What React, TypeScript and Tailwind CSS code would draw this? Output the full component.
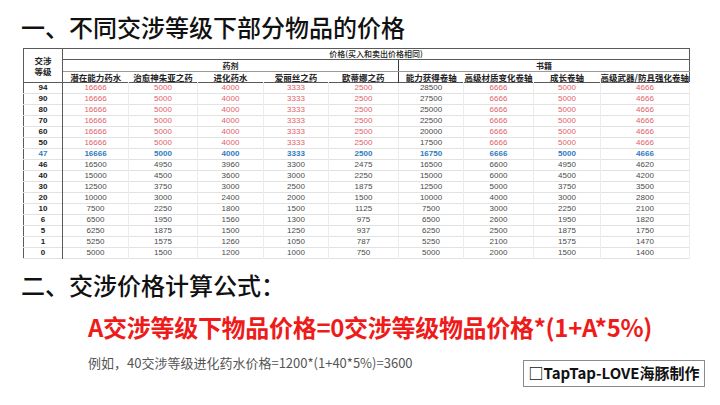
import React from 'react';

const names = ["潜在能力药水", "治愈神朱亚之药", "进化药水", "爱丽丝之药", "欧蒂娜之药", "能力获得卷轴", "高级材质变化卷轴", "成长卷轴", "高级武器/防具强化卷轴"];
const widths = [39, 66, 69, 66, 65, 70, 65, 70, 67, 89];

const rows: number[][] = [
  [94, 16666, 5000, 4000, 3333, 2500, 28500, 6666, 5000, 4666],
  [90, 16666, 5000, 4000, 3333, 2500, 27500, 6666, 5000, 4666],
  [80, 16666, 5000, 4000, 3333, 2500, 25000, 6666, 5000, 4666],
  [70, 16666, 5000, 4000, 3333, 2500, 22500, 6666, 5000, 4666],
  [60, 16666, 5000, 4000, 3333, 2500, 20000, 6666, 5000, 4666],
  [50, 16666, 5000, 4000, 3333, 2500, 17500, 6666, 5000, 4666],
  [47, 16666, 5000, 4000, 3333, 2500, 16750, 6666, 5000, 4666],
  [46, 16500, 4950, 3960, 3300, 2475, 16500, 6600, 4950, 4620],
  [40, 15000, 4500, 3600, 3000, 2250, 15000, 6000, 4500, 4200],
  [30, 12500, 3750, 3000, 2500, 1875, 12500, 5000, 3750, 3500],
  [20, 10000, 3000, 2400, 2000, 1500, 10000, 4000, 3000, 2800],
  [10, 7500, 2250, 1800, 1500, 1125, 7500, 3000, 2250, 2100],
  [6, 6500, 1950, 1560, 1300, 975, 6500, 2600, 1950, 1820],
  [5, 6250, 1875, 1500, 1250, 937, 6250, 2500, 1875, 1750],
  [1, 5250, 1575, 1260, 1050, 787, 5250, 2100, 1575, 1470],
  [0, 5000, 1500, 1200, 1000, 750, 5000, 2000, 1500, 1400],
];

function cellColor(level: number, col: number) {
  if (level === 47) return "text-[#2f7cc0] font-semibold";
  if (col === 0) return "text-[#1a1a1a] font-bold";
  if (level >= 50 && col !== 6) return "text-[#e06068]";
  return "text-[#4a4a4a]";
}

export default function App() {
  return (
    <div className="w-[720px] h-[405px] bg-white overflow-hidden font-['Liberation_Sans','Noto_Sans_CJK_SC',sans-serif]">
      <div className="pt-[14px] pl-[21px] text-[24px] leading-[26px] font-medium text-[#111] font-['Noto_Sans_CJK_SC',sans-serif]">
        一、不同交涉等级下部分物品的价格
      </div>

      <table className="mt-[8px] ml-[23px] table-fixed border-collapse border-[1.5px] border-[#5a5a5a] text-[8px] leading-none text-center">
        <colgroup>
          {widths.map((w, i) => (
            <col key={i} style={{ width: w }} />
          ))}
        </colgroup>
        <thead className="font-['Noto_Sans_CJK_SC',sans-serif] text-[#222]">
          <tr className="h-[11px]">
            <td rowSpan={3} className="border-r-[1.5px] border-b-[1.5px] border-[#5a5a5a] font-bold text-[8.5px] leading-[11px]">
              交涉<br />等级
            </td>
            <td colSpan={9} className="border-b border-[#5a5a5a] font-medium">
              价格(买入和卖出价格相同)
            </td>
          </tr>
          <tr className="h-[12px]">
            <td colSpan={5} className="border-b border-[#9a9a9a] font-bold">药剂</td>
            <td colSpan={4} className="border-l-[1.5px] border-b border-l-[#3a3a3a] border-b-[#9a9a9a] font-bold">书籍</td>
          </tr>
          <tr className="h-[11px] border-b-[1.5px] border-[#5a5a5a]">
            {names.map((n, i) => (
              <td
                key={n}
                className={`font-bold whitespace-nowrap text-[8.5px] ${i === 5 ? "border-l-[1.5px] border-l-[#3a3a3a]" : ""}`}
              >
                {n}
              </td>
            ))}
          </tr>
        </thead>
        <tbody>
          {rows.map((r) => (
            <tr key={r[0]} className="border-b border-[#e2e2e2]">
              {r.map((v, c) => (
                <td
                  key={c}
                  className={`h-[11px] p-0 ${cellColor(r[0], c)} ${
                    c === 0
                      ? "border-r-[1.5px] border-r-[#5a5a5a]"
                      : c === 6
                      ? "border-l-[1.5px] border-l-[#3a3a3a] border-r border-r-[#ececec]"
                      : "border-r border-r-[#ececec]"
                  }`}
                >
                  {v}
                </td>
              ))}
            </tr>
          ))}
        </tbody>
      </table>

      <div className="mt-[13px] pl-[21px] text-[24px] leading-[26px] font-medium text-[#111] font-['Noto_Sans_CJK_SC',sans-serif]">
        二、交涉价格计算公式：
      </div>

      <div className="mt-[16px] pl-[88px] text-[24px] leading-[26px] font-bold text-[#ee1b1b] font-['Noto_Sans_CJK_SC',sans-serif] whitespace-nowrap tracking-[-0.3px]">
        A交涉等级下物品价格=0交涉等级物品价格*(1+A*5%)
      </div>

      <div className="mt-[15px] flex items-start">
        <div className="pl-[88px] text-[13px] leading-[16px] text-[#555] font-['Noto_Sans_CJK_SC',sans-serif] whitespace-nowrap">
          例如，40交涉等级进化药水价格=1200*(1+40*5%)=3600
        </div>
        <div className="ml-auto mr-[15px] mt-[5px] h-[27px] w-[182px] border border-[#8a8a8a] flex items-center justify-center text-[15px] font-bold text-[#111] font-['Noto_Sans_CJK_SC',sans-serif] whitespace-nowrap">
          □TapTap-LOVE海豚制作
        </div>
      </div>
    </div>
  );
}
